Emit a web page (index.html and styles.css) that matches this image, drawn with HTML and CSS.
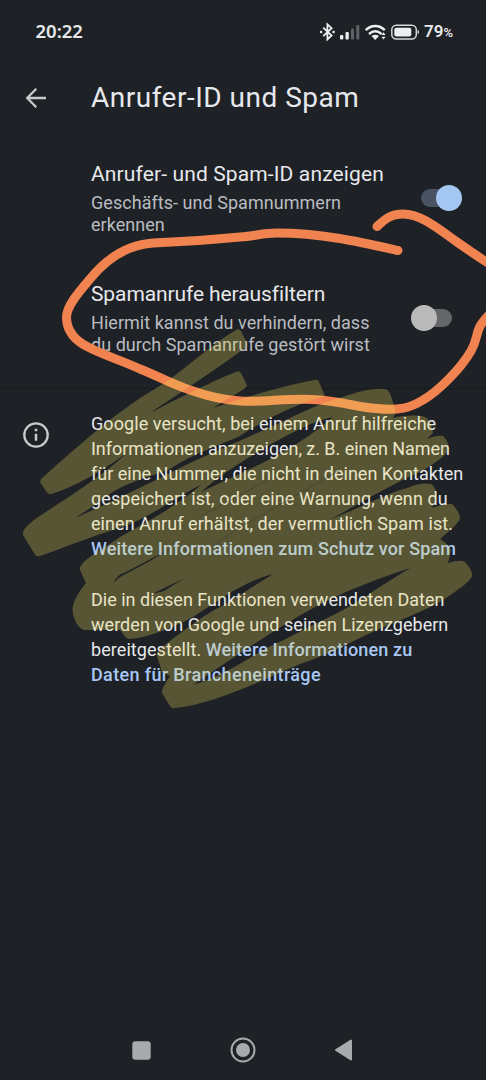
FILE: index.html
```html
<!DOCTYPE html>
<html lang="de">
<head>
<meta charset="utf-8">
<title>Anrufer-ID und Spam</title>
<link rel="stylesheet" href="styles.css">
</head>
<body>
<div class="phone">
  <header class="status">
    <span class="clock">20:22</span>
    <div class="indicators">
      <svg width="101" height="20" viewBox="0 0 101 20" fill="none">
        <g stroke="#eceef0" stroke-width="1.8">
          <path d="M4.2 5.6 12.6 13.5 8.4 17.500V2.300L12.600 6.200 4.200 14.200"/>
        </g>
        <circle cx="2.1" cy="10" r="1.3" fill="#eceef0"/><circle cx="14.6" cy="10" r="1.3" fill="#eceef0"/>
        <rect x="21" y="13" width="3.3" height="4.6" rx="1" fill="#eceef0"/>
        <rect x="26.5" y="10" width="3.3" height="7.6" rx="1" fill="#eceef0"/>
        <rect x="32" y="6.5" width="3" height="11.1" rx="1" fill="#5d6165"/>
        <rect x="37.3" y="3" width="3" height="14.6" rx="1" fill="#5d6165"/>
        <g stroke="#eceef0" stroke-width="2.5"><path d="M46.7 8.2C52.5 2.7 60 2.7 65.8 8.2"/><path d="M50 12C54 8.5 58.5 8.5 62.5 12"/></g>
        <path d="M52.5 14.1Q56.2 11.2 60 14.1L56.2 18Z" fill="#eceef0"/>
        <path d="m62.4 13 2.1-2.7 2.1 2.7zm0 1.8 2.1 2.7 2.1-2.7z" fill="#eceef0"/>
        <rect x="72.8" y="3.2" width="24.5" height="13.8" rx="4.5" stroke="#d5d7d9" stroke-width="1.5"/>
        <rect x="75.3" y="5.7" width="17" height="8.8" rx="2" fill="#eceef0"/>
        <path d="M98.7 7.6q2.6 2.5 0 5z" fill="#eceef0"/>
      </svg>
      <span class="percent">79<small>%</small></span>
    </div>
  </header>

  <div class="appbar">
    <svg class="back" width="22" height="22" viewBox="0 0 22 22" fill="none" stroke="#c8cace" stroke-width="2.3"><path d="M21 11H2.500M11.300 1.700 2.200 11l9.100 9.300"/></svg>
    <h1>Anrufer-ID und Spam</h1>
  </div>

  <main>
    <section class="setting">
      <div class="label">
        <h2>Anrufer- und Spam-ID anzeigen</h2>
        <p>Geschäfts- und Spamnummern<br>erkennen</p>
      </div>
      <div class="switch on"><i></i></div>
    </section>
    <section class="setting second">
      <div class="label">
        <h2 class="tight">Spamanrufe herausfiltern</h2>
        <p>Hiermit kannst du verhindern, dass<br>du durch Spamanrufe gestört wirst</p>
      </div>
      <div class="switch"><i></i></div>
    </section>
    <section class="info">
      <svg class="info-icon" width="26" height="26" viewBox="0 0 26 26" fill="none"><circle cx="13" cy="13" r="11.7" stroke="#c8cace" stroke-width="2.3"/><path d="M13 11.7v7.1M13 6.7v2.5" stroke="#c8cace" stroke-width="2.5"/></svg>
      <div class="copy">
        <p><span class="w1">Google versucht, bei einem Anruf hilfreiche</span><br><span class="w2">Informationen anzuzeigen, z. B. einen Namen</span><br>für eine Nummer, die nicht in deinen Kontakten<br><span class="w3">gespeichert ist, oder eine Warnung, wenn du</span><br><span class="w1">einen Anruf erhältst, der vermutlich Spam ist.</span><br><a>Weitere Informationen zum Schutz vor Spam</a></p>
        <p>Die in diesen Funktionen verwendeten Daten<br><span class="w4">werden von Google und seinen Lizenzgebern</span><br><span class="w1">bereitgestellt. </span><a>Weitere Informationen zu<br><span class="w5">Daten für Brancheneinträge</span></a></p>
      </div>
    </section>
  </main>

  <nav class="navbar">
    <svg width="19" height="19"><rect x=".3" y=".3" width="18.4" height="18.4" rx="3" fill="#a9aaac"/></svg>
    <svg width="26" height="26"><circle cx="13" cy="13" r="11.5" fill="none" stroke="#a9aaac" stroke-width="2"/><circle cx="13" cy="13" r="7" fill="#a9aaac"/></svg>
    <svg width="19" height="22"><path d="M2 11 17 1.5v19z" fill="#a9aaac" stroke="#a9aaac" stroke-width="2" stroke-linejoin="round"/></svg>
  </nav>

  <svg class="marks" width="486" height="1080" viewBox="0 0 486 1080" fill="none">
    <!-- circle drawn with the pen -->
    <g stroke="#f08350" stroke-width="9" stroke-linecap="round" stroke-linejoin="round">
      <path d="M398 250.500C360 242 321 233 277 233C263 233 255 236 240 237C210 240 176 242 153 243C123 245 103 263 90 279C78 293 66 307 66.500 318C67 333 77 342 90 348C106 356 123 361 140 369C160 377 174 385 190 390C207 396 223 400 240 401C265 403 290 397 320 400C345 402 359 408 377 408.500C399 411 410 408 423 400C437 392 460 370 471 351C480 335 473 331 489 315"/>
      <path d="M377 226.500C384 220 390 214 403 214C420 214 436 227 457 242Q474 254 491 265"/>
    </g>
    <!-- highlighter scribble with the gaps between its strokes -->
    <g opacity=".28">
      <path fill="#f0dd5d" fill-rule="evenodd" d="M41 479C90 435 125 406 158 387C180 374 210 345 236 330Q239 328 241 331L247 343Q248 346 245 348C215 370 180 393 150 413C175 400 210 382 236 372Q239 370 241 373L247 385Q247 387 244 389L213 408C245 397 290 384 315 380Q318 379 319 382L325 396C300 403 270 416 240 436C220 445 190 455 170 469C148 478 120 483 98 503L75 518C105 505 135 490 160 478C195 460 225 447 255 434C285 421 320 402 343 397C360 391 373 388 385 389Q389 390 391 396L396 412L393 418C405 415 418 415 425 417Q431 419 433 433L427 439Q437 435 443 436Q448 441 449 448Q450 453 430 466C420 473 405 478 397 483C375 494 350 509 329 520C355 510 390 492 407 488Q421 482 431 484Q435 485 437 497L432 508Q442 504 452 504Q460 512 460 519C457 525 447 533 440 539Q450 545 451 551L448 563Q460 559 465 562Q475 573 471 578C467 584 455 592 443 600C420 613 398 621 377 630C350 642 330 654 300 664C265 679 215 704 175 708Q172 709 170 706L162 693Q161 689 170 676L162 672L157 656Q155 652 170 641C187 628 205 614 224 605L273 574C240 583 220 600 193 617C174 627 150 637 130 639Q126 639 124 635L120 630H84C76 628 71 612 73 606Q75 596 86 583L80 570C78 561 105 548 120 537C150 520 177 506 202 484C175 498 152 516 125 526C90 537 60 549 40 556Q36 557 34 553L23 535Q21 530 34 520C60 502 98 480 127 453C100 472 75 487 51 494Q48 495 46 491L40 482Z
      M333 417C310 422 290 434 273 443C250 456 220 475 201 492C235 476 262 464 281 453Q310 437 333 417Z
      M113 583Q118 574 124 573L170 549L150 561L120 577Z
      M152 594L185 578L164 591Z
      M410 568C380 578 350 589 325 602C290 619 240 653 193 685C235 672 257 650 284 640C317 622 350 609 375 590Z"/>
    </g>
    <path d="M201 516 268 480M213 545 246 524 340 470" stroke="#33362a" stroke-width=".8" opacity=".5"/>
  </svg>
</div>
</body>
</html>
```
FILE: styles.css
```css
* { box-sizing: border-box; }
body { margin: 0; background: #1e2125; color: #e6e8ec; font-family: Roboto, "Noto Sans", sans-serif; }
.phone { position: relative; width: 486px; height: 1080px; overflow: hidden; display: flex; flex-direction: column; }
h1, h2, p { margin: 0; font-weight: 400; white-space: nowrap; }
.status { height: 64px; padding: 0 32px 0 35.500px; display: flex; align-items: center; justify-content: space-between; flex: none; }
.clock { font: 600 18.5px/24px "Noto Sans", sans-serif; margin-top: -2px; letter-spacing: 0; }
.indicators { display: flex; align-items: center; gap: 4px; margin-top: -1px; }
.percent { font: 600 17px/20px Roboto, sans-serif; width: 30px; white-space: nowrap; }
.percent small { font-size: 13px; }
.appbar { height: 96px; padding: 16px 0 0 25px; display: flex; align-items: flex-start; flex: none; }
.back { margin: 7px 44px 0 0; }
h1 { font-size: 28px; line-height: 36px; letter-spacing: .5px; }
main { flex: 1; }
.setting { height: 120px; padding: 0 24.500px 0 91px; display: flex; justify-content: space-between; }
.setting.second { height: 109px; border-bottom: 1px solid #181b1e; padding-right: 34px; }
h2 { font-size: 21px; line-height: 28px; letter-spacing: .13px; }
.tight { letter-spacing: -.1px; }
.label p { margin-top: 4px; font-size: 18px; line-height: 22px; letter-spacing: .04px; color: #b9bcc1; }
.switch { position: relative; width: 41px; height: 26px; margin-top: 25px; display: flex; align-items: center; }
.switch::before { content: ""; position: absolute; right: 0; top: 4px; width: 35px; height: 18px; border-radius: 9px; background: #65666a; }
.switch i { position: relative; width: 26px; height: 26px; border-radius: 50%; background: #bababa; }
.switch.on { justify-content: flex-end; }
.switch.on::before { right: auto; left: 0; background: #495364; }
.switch.on i { background: #a4c6f2; }
.info { padding: 21.600px 0 0 22.500px; display: flex; }
.info-icon { flex: none; margin: 11.400px 42.500px 0 0; }
.copy { font-size: 18px; line-height: 25.140px; }
.copy p + p { margin-top: 25.140px; }
.copy a { color: #a8c7f5; font-weight: 500; letter-spacing: .14px; }
.w1 { letter-spacing: .07px; }
.w2 { letter-spacing: -.04px; }
.w3 { letter-spacing: .12px; }
.w4 { letter-spacing: .04px; }
.w5 { letter-spacing: .35px; }
.navbar { height: 60px; display: flex; align-items: center; justify-content: space-between; padding: 0 133px 0 132px; flex: none; }
.marks { position: absolute; left: 0; top: 0; pointer-events: none; }
```
